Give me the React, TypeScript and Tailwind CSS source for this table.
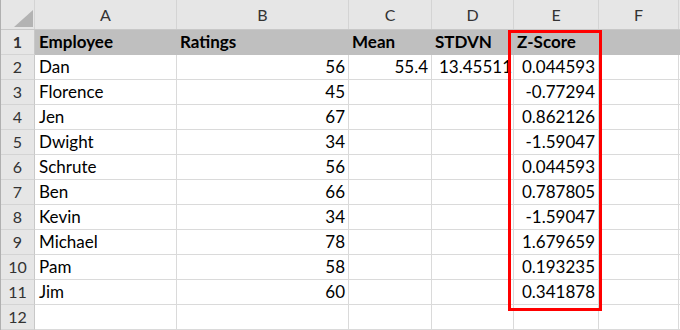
import React from "react";

const rows: [string, string, string, string, string][] = [
  ["Dan", "56", "55.4", "13.45511", "0.044593"],
  ["Florence", "45", "", "", "-0.77294"],
  ["Jen", "67", "", "", "0.862126"],
  ["Dwight", "34", "", "", "-1.59047"],
  ["Schrute", "56", "", "", "0.044593"],
  ["Ben", "66", "", "", "0.787805"],
  ["Kevin", "34", "", "", "-1.59047"],
  ["Michael", "78", "", "", "1.679659"],
  ["Pam", "58", "", "", "0.193235"],
  ["Jim", "60", "", "", "0.341878"],
];

const font = { fontFamily: "Lato, 'Liberation Sans', sans-serif" };

function RowHdr({ n }: { n: string }) {
  return (
    <div className="w-[34px] shrink-0 h-full flex items-center justify-center bg-[#e6e6e6] border-r border-r-[#c8c8c8] border-b border-b-[#d4d4d4] text-[16px] text-[#333]">
      {n}
    </div>
  );
}

export default function App() {
  return (
    <div
      className="relative w-[680px] h-[330px] overflow-hidden bg-white text-black border-l border-l-[#b0b0b0]"
      style={font}
    >
      {/* Column header row */}
      <div className="flex h-[30px] bg-[#e6e6e6] border-b border-b-[#c8c8c8] text-[16px] text-[#333]">
        <div className="w-[34px] shrink-0 relative border-r border-r-[#d4d4d4]">
          <svg className="absolute left-[13px] top-[10px]" width="19" height="17" viewBox="0 0 19 17">
            <polygon points="19,0 19,17 0,17" fill="#b3b3b3" />
          </svg>
        </div>
        {[
          ["A", "w-[142px]"],
          ["B", "w-[172px]"],
          ["C", "w-[83px]"],
          ["D", "w-[82px]"],
          ["E", "w-[85px]"],
          ["F", "w-[80px]"],
        ].map(([l, w]) => (
          <div key={l} className={`${w} shrink-0 flex items-center justify-center border-r border-r-[#d4d4d4]`}>
            {l}
          </div>
        ))}
        <div className="flex-1" />
      </div>

      {/* Row 1 */}
      <div className="flex h-[25px] text-[17px] font-bold">
        <RowHdr n="1" />
        <div className="flex-1 flex h-full bg-[#bfbfbf] border-b border-b-[#bfbfbf]">
          <div className="w-[142px] shrink-0 flex items-center pl-[4px]">Employee</div>
          <div className="w-[172px] shrink-0 flex items-center pl-[3px]">Ratings</div>
          <div className="w-[83px] shrink-0 flex items-center pl-[3px]">Mean</div>
          <div className="w-[82px] shrink-0 flex items-center pl-[3px]">STDVN</div>
          <div className="w-[85px] shrink-0 flex items-center pl-[3px]">Z-Score</div>
          <div className="flex-1" />
        </div>
      </div>

      {rows.map((r, i) => (
        <div key={i} className="flex h-[25px] text-[17px]">
          <RowHdr n={String(i + 2)} />
          <div className="w-[142px] shrink-0 flex items-center pl-[4px] border-r border-b border-[#dadada]">{r[0]}</div>
          <div className="w-[172px] shrink-0 flex items-center justify-end pr-[3px] border-r border-b border-[#dadada]">{r[1]}</div>
          <div className="w-[83px] shrink-0 flex items-center justify-end pr-[3px] border-r border-b border-[#dadada]">{r[2]}</div>
          <div className="w-[82px] shrink-0 flex items-center justify-end pr-[1px] border-r border-b border-[#dadada] whitespace-nowrap overflow-visible">{r[3]}</div>
          <div className="w-[85px] shrink-0 flex items-center justify-end pr-[3px] border-r border-b border-[#dadada]">{r[4]}</div>
          <div className="w-[80px] shrink-0 border-r border-b border-[#dadada]" />
          <div className="flex-1 border-b border-[#dadada]" />
        </div>
      ))}

      <div className="flex h-[25px] text-[17px]">
        <RowHdr n="12" />
        <div className="w-[142px] shrink-0 border-r border-b border-[#dadada]" />
        <div className="w-[172px] shrink-0 border-r border-b border-[#dadada]" />
        <div className="w-[83px] shrink-0 border-r border-b border-[#dadada]" />
        <div className="w-[82px] shrink-0 border-r border-b border-[#dadada]" />
        <div className="w-[85px] shrink-0 border-r border-b border-[#dadada]" />
        <div className="w-[80px] shrink-0 border-r border-b border-[#dadada]" />
        <div className="flex-1 border-b border-[#dadada]" />
      </div>

      {/* Red highlight rectangle */}
      <div className="absolute left-[507px] top-[30px] w-[94px] h-[281px] border-[3px] border-[#ff0000] pointer-events-none" />
    </div>
  );
}
